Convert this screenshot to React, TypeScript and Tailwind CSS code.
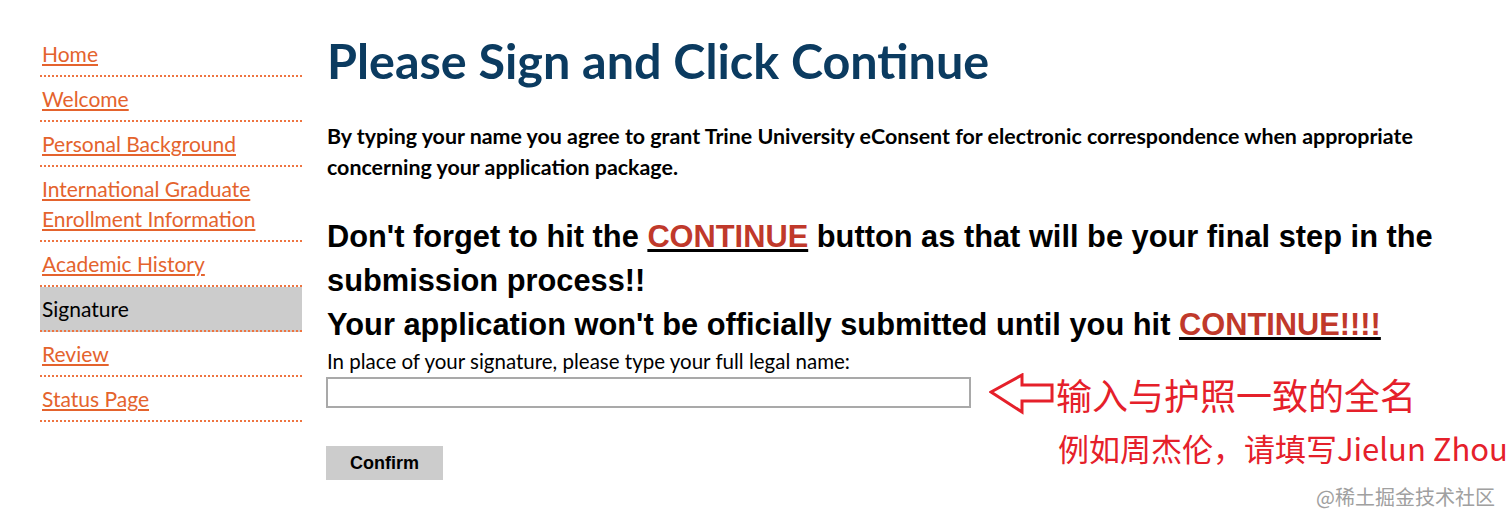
import React from "react";

const sans = { fontFamily: '"Lato", "Noto Sans", sans-serif' };
const arial = { fontFamily: '"Liberation Sans", Arial, sans-serif' };
const cjk = { fontFamily: '"Noto Sans CJK SC", sans-serif' };

const items: { label: string; active?: boolean }[] = [
  { label: "Home" },
  { label: "Welcome" },
  { label: "Personal Background" },
  { label: "International Graduate Enrollment Information" },
  { label: "Academic History" },
  { label: "Signature", active: true },
  { label: "Review" },
  { label: "Status Page" },
];

function Arrow() {
  return (
    <svg width="66" height="42" viewBox="0 0 66 42" className="shrink-0">
      <path
        d="M2 19 L33 2 L33 12 L63 12 L63 28 L33 28 L33 39 Z"
        fill="none"
        stroke="#e5202a"
        strokeWidth="3"
        strokeLinejoin="miter"
      />
    </svg>
  );
}

export default function App() {
  return (
    <div className="relative w-[1512px] h-[525px] bg-white overflow-hidden">
      <div className="flex pt-[32px] pl-[40px]">
        <nav className="w-[262px] shrink-0" style={sans}>
          {items.map((it) => (
            <div
              key={it.label}
              className={
                "border-b-2 border-dotted border-[#ee7440] pt-[7px] pb-[6px] pl-[2px] text-[21px] leading-[30px] " +
                (it.active ? "bg-[#cccccc] text-black" : "")
              }
            >
              {it.active ? (
                <span>{it.label}</span>
              ) : (
                <a href="#" className="text-[#e4632d] underline underline-offset-2">
                  {it.label}
                </a>
              )}
            </div>
          ))}
        </nav>

        <main className="ml-[25px] w-[1140px] shrink-0">
          <h1
            className="text-[48.5px] font-bold leading-[56px] text-[#0b3b60]"
            style={sans}
          >
            Please Sign and Click Continue
          </h1>
          <p
            className="mt-[33px] text-[21.4px] font-bold leading-[31px] text-black w-[1110px]"
            style={sans}
          >
            By typing your name you agree to grant Trine University eConsent for electronic
            correspondence when appropriate concerning your application package.
          </p>
          <div
            className="mt-[32px] text-[30.8px] font-bold leading-[44px] text-black w-[1130px]"
            style={arial}
          >
            <p>
              Don't forget to hit the{" "}
              <span className="text-[#c0392b] underline decoration-black">CONTINUE</span> button
              as that will be your final step in the submission process!!
            </p>
            <p>
              Your application won't be officially submitted until you hit{" "}
              <span className="text-[#c0392b] underline decoration-black">CONTINUE!!!!</span>
            </p>
          </div>
          <label
            className="block text-[20.5px] leading-[26px] text-black mt-[1px]"
            style={sans}
          >
            In place of your signature, please type your full legal name:
          </label>
          <div className="flex items-start mt-[3px]">
            <input
              type="text"
              className="w-[645px] h-[31px] border-2 border-[#a9a9a9] bg-white outline-none -ml-[1px] shrink-0"
            />
            <div className="ml-[18px] -mt-[4px] flex items-center">
              <Arrow />
              <span className="ml-[1px] text-[36px] leading-[40px] text-[#e5202a] whitespace-nowrap" style={cjk}>
                输入与护照一致的全名
              </span>
            </div>
          </div>
          <button
            className="block mt-[31px] -ml-[1px] w-[117px] h-[34px] bg-[#cccccc] text-[18px] font-bold text-black"
            style={arial}
          >
            Confirm
          </button>
        </main>
      </div>
      <div
        className="absolute left-[1058px] top-[428px] text-[31px] leading-[40px] text-[#e5202a] whitespace-nowrap"
        style={cjk}
      >
        例如周杰伦，请填写Jielun Zhou
      </div>
      <div
        className="absolute right-[17px] bottom-[16px] text-[20px] leading-[24px] text-[#a0a0a0]"
        style={cjk}
      >
        @稀土掘金技术社区
      </div>
    </div>
  );
}
